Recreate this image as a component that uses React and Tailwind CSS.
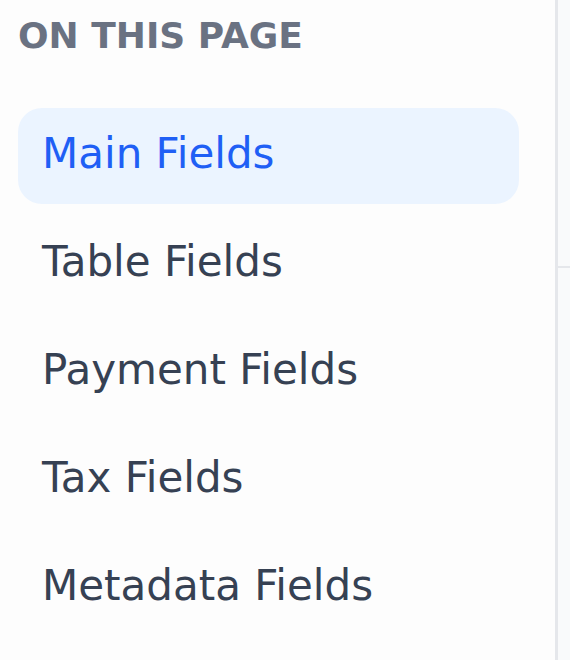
import { useState } from "react";

const sections = [
  { id: "main", label: "Main Fields" },
  { id: "table", label: "Table Fields" },
  { id: "payment", label: "Payment Fields" },
  { id: "tax", label: "Tax Fields" },
  { id: "metadata", label: "Metadata Fields" },
];

const App = () => {
  const [active, setActive] = useState("main");

  return (
    <div
      className="flex h-[660px] w-[570px] overflow-hidden bg-white"
      style={{ fontFamily: '"DejaVu Sans", sans-serif' }}
    >
      {/* on-this-page nav */}
      <aside className="w-[555px] shrink-0 bg-[#fdfdfd] px-[18px] pt-[12px]">
        <h2 className="mb-[48px] text-[36px] leading-[48px] font-bold uppercase text-gray-500">
          On this page
        </h2>
        <nav className="flex w-[501px] flex-col gap-[12px]">
          {sections.map((s) => (
            <a
              key={s.id}
              href={`#${s.id}`}
              onClick={(e) => {
                e.preventDefault();
                setActive(s.id);
              }}
              className={`block rounded-[24px] px-[24px] pt-[16px] pb-[20px] text-[42px] leading-[60px] ${
                active === s.id
                  ? "bg-[#ebf4ff] text-[#1f5ff5]"
                  : "text-gray-700 hover:bg-gray-50"
              }`}
            >
              {s.label}
            </a>
          ))}
        </nav>
      </aside>

      {/* main content edge */}
      <div className="flex flex-1 flex-col border-l-[3px] border-[#e5e7eb] bg-[#f9fafb]">
        <div className="h-[268px] border-b-2 border-[#e5e7eb]" />
        <div className="flex-1" />
      </div>
    </div>
  );
};

export default App;
